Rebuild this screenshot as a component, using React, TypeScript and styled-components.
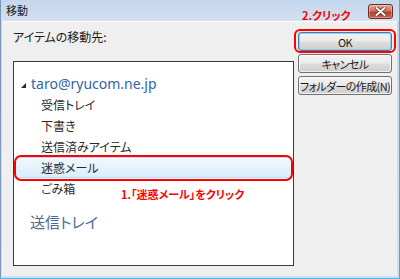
import React from "react";
import styled, { createGlobalStyle } from "styled-components";

const Global = createGlobalStyle`
  html, body { margin: 0; padding: 0; background: #ffffff; }
  body { font-family: "Noto Sans CJK JP", "Noto Sans", sans-serif; }
  * { box-sizing: border-box; }
`;

const Window = styled.div`
  width: 400px;
  height: 279px;
  display: flex;
  flex-direction: column;
  background: linear-gradient(#bfd3ea, #c9dbef 30%, #cfe0f2);
  border-left: 1px solid #7a96b8;
  border-right: 1px solid #7a96b8;
  border-bottom: 1px solid #4fb8e0;
`;

const TitleBar = styled.div`
  height: 21px;
  flex: none;
  display: flex;
  align-items: center;
  padding-left: 5px;
  padding-right: 6px;
  background: linear-gradient(#c3d6ec, #d3e1f1);
`;

const Title = styled.span`
  font-size: 11px;
  color: #1a1a1a;
  line-height: 1;
`;

const CloseButton = styled.div`
  margin-left: auto;
  margin-top: 2px;
  width: 25px;
  height: 15px;
  border: 1px solid #6b2c22;
  border-radius: 3px;
  background: linear-gradient(#e4a797, #cf7563 45%, #b8402c 55%, #c9604a);
  display: flex;
  align-items: center;
  justify-content: center;
  box-shadow: inset 0 0 0 1px rgba(255, 255, 255, 0.35);
`;

const Content = styled.div`
  flex: 1;
  margin: 0 2px 2px 1px;
  background: #efefef;
  border-top: 1px solid #ffffff;
  display: flex;
  padding: 0 0 10px 11px;
`;

const LeftCol = styled.div`
  display: flex;
  flex-direction: column;
  width: 281px;
`;

const Label = styled.div`
  margin-top: 7px;
  height: 16px;
  line-height: 16px;
  font-size: 12px;
  color: #1a1a1a;
  font-feature-settings: "palt";
`;

const Tree = styled.div`
  position: relative;
  margin-top: 16px;
  flex: 1;
  background: #ffffff;
  border: 1px solid #3a3a3a;
  padding-top: 11px;
  display: flex;
  flex-direction: column;
`;

const AccountRow = styled.div`
  height: 21px;
  display: flex;
  align-items: center;
  padding-left: 7px;
  font-family: "Noto Sans", "Noto Sans CJK JP", sans-serif;
  font-size: 14px;
  color: #2f66a8;
`;

const Arrow = styled.span`
  width: 0;
  height: 0;
  border-left: 5px solid transparent;
  border-bottom: 5px solid #262626;
  margin-right: 5px;
  margin-top: 4px;
`;

const Row = styled.div<{ $selected?: boolean }>`
  position: relative;
  height: 21px;
  display: flex;
  align-items: center;
  padding-left: 25px;
  margin: 0 1px;
  font-size: 12px;
  color: #2a2a2a;
  font-feature-settings: "palt";
  border-radius: 3px;
  border: 1px solid ${(p) => (p.$selected ? "#b8dcf6" : "transparent")};
  background: ${(p) =>
    p.$selected ? "linear-gradient(#f1f8fe, #dcedfc)" : "transparent"};
`;

const OutboxRow = styled.div`
  margin-top: 9px;
  height: 26px;
  display: flex;
  align-items: center;
  padding-left: 16px;
  font-size: 15px;
  color: #4c6b94;
  font-feature-settings: "palt";
`;

const RedRing = styled.div<{ $t: number; $r: number; $b: number; $l: number; $radius: number }>`
  position: absolute;
  top: ${(p) => p.$t}px;
  right: ${(p) => p.$r}px;
  bottom: ${(p) => p.$b}px;
  left: ${(p) => p.$l}px;
  border: 2px solid #ff0000;
  border-radius: ${(p) => p.$radius}px;
  pointer-events: none;
`;

const Note = styled.div<{ $top: number; $left: number }>`
  position: absolute;
  top: ${(p) => p.$top}px;
  left: ${(p) => p.$left}px;
  white-space: nowrap;
  font-size: 11px;
  font-weight: 700;
  line-height: 14px;
  color: #ff0000;
  font-feature-settings: "palt";
`;

const RightCol = styled.div`
  position: relative;
  margin-left: 4px;
  width: 94px;
  padding-top: 10px;
  display: flex;
  flex-direction: column;
  gap: 3px;
`;

const ButtonWrap = styled.div`
  position: relative;
`;

const Button = styled.div<{ $default?: boolean }>`
  height: 19px;
  display: flex;
  align-items: center;
  justify-content: center;
  white-space: nowrap;
  font-size: 11px;
  letter-spacing: -0.6px;
  color: #1a1a1a;
  font-feature-settings: "palt";
  border-radius: 3px;
  border: 1px solid ${(p) => (p.$default ? "#3c7fb1" : "#707070")};
  background: linear-gradient(#f3f3f3, #ebebeb 48%, #dddddd 52%, #cfcfcf);
  box-shadow: inset 0 0 0 1px
    ${(p) => (p.$default ? "rgba(120, 200, 240, 0.8)" : "rgba(255,255,255,0.7)")};
`;

export default function App() {
  return (
    <>
      <Global />
      <Window>
        <TitleBar>
          <Title>移動</Title>
          <CloseButton>
            <svg width="11" height="9" viewBox="0 0 11 9">
              <path
                d="M1.5 1 L9.5 8 M9.5 1 L1.5 8"
                stroke="#5a2a22"
                strokeWidth="3.6"
                strokeLinecap="round"
              />
              <path
                d="M1.5 1 L9.5 8 M9.5 1 L1.5 8"
                stroke="#ffffff"
                strokeWidth="2"
                strokeLinecap="round"
              />
            </svg>
          </CloseButton>
        </TitleBar>
        <Content>
          <LeftCol>
            <Label>アイテムの移動先:</Label>
            <Tree>
              <AccountRow>
                <Arrow />
                taro@ryucom.ne.jp
              </AccountRow>
              <Row>受信トレイ</Row>
              <Row>下書き</Row>
              <Row>送信済みアイテム</Row>
              <Row $selected>
                迷惑メール
                <RedRing $t={-3} $r={-2} $b={-4} $l={-2} $radius={7} />
              </Row>
              <Row>ごみ箱</Row>
              <OutboxRow>送信トレイ</OutboxRow>
              <Note $top={125} $left={107}>1.「迷惑メール」をクリック</Note>
            </Tree>
          </LeftCol>
          <RightCol>
            <Note $top={-14} $left={4}>2.クリック</Note>
            <ButtonWrap>
              <Button $default>OK</Button>
              <RedRing $t={-3} $r={-4} $b={-2} $l={-4} $radius={6} />
            </ButtonWrap>
            <Button>キャンセル</Button>
            <Button>フォルダーの作成(N)</Button>
          </RightCol>
        </Content>
      </Window>
    </>
  );
}
